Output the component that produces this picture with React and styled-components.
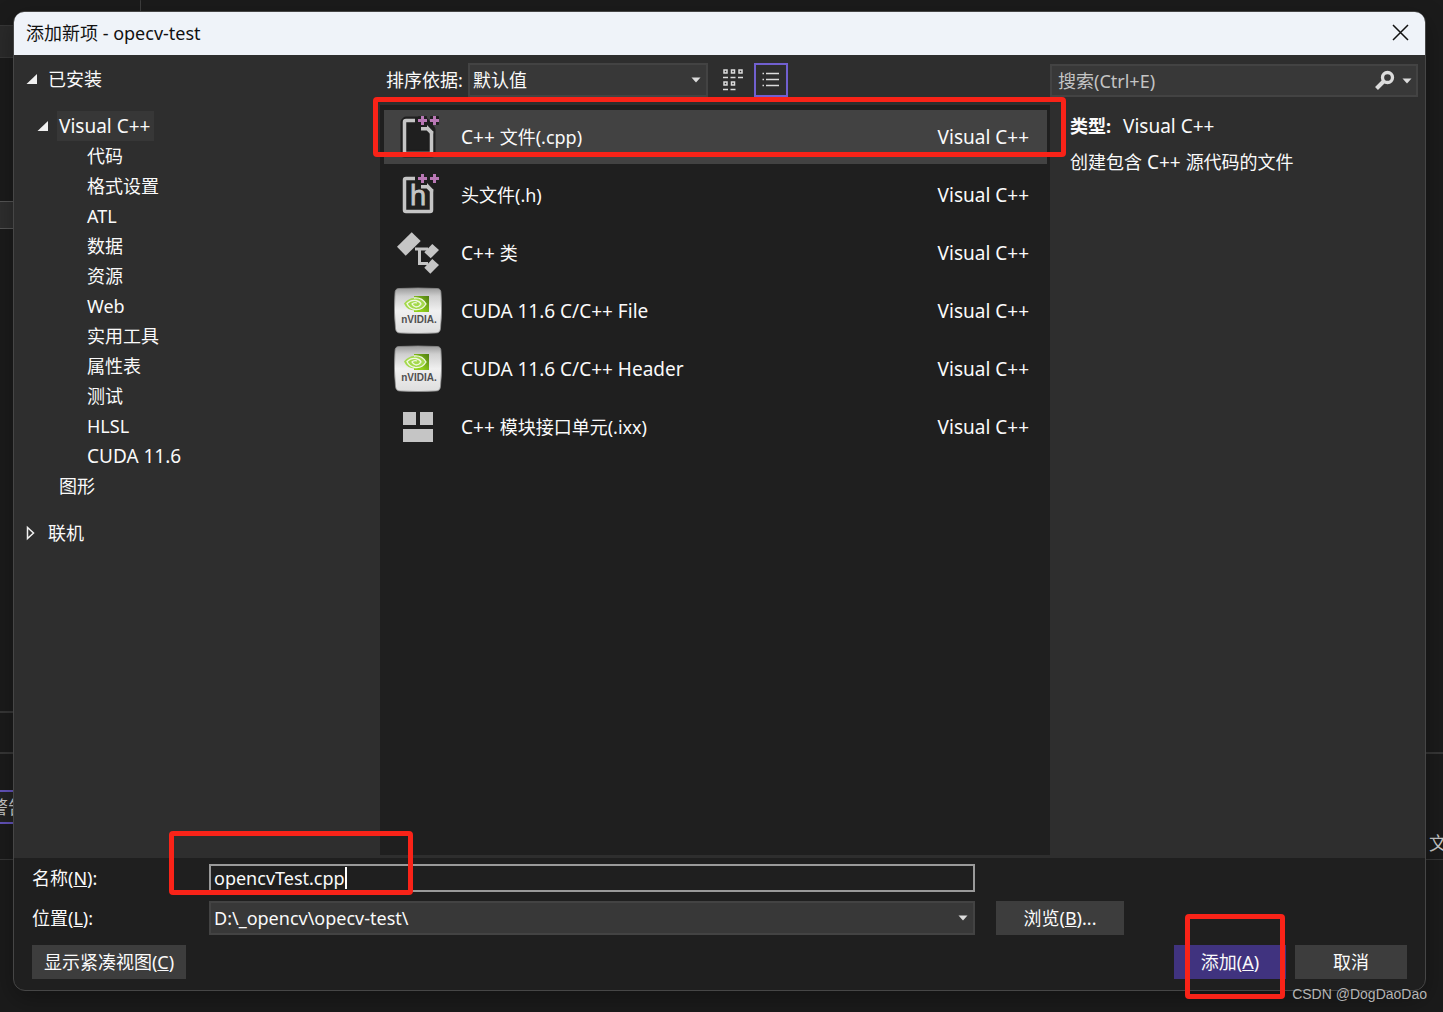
import React from "react";
import styled, { createGlobalStyle, css } from "styled-components";

const c = {
  desk: "#1b1b1b",
  panel: "#2e2e2e",
  dark: "#1f1f1f",
  field: "#383838",
  edge: "#464646",
  text: "#fafafa",
  icon: "#c5c5c5",
  accent: "#7160d0",
  mark: "#f92318",
};

const Global = createGlobalStyle`
  * { box-sizing: border-box; }
  body { margin: 0; background: ${c.desk}; }
  body, button, input, select {
    font-family: "Noto Sans", "Noto Sans CJK SC", sans-serif;
    font-size: 18px;
    line-height: 30px;
    color: ${c.text};
  }
  button, input, select { margin: 0; padding: 0; border: 0; border-radius: 0; background: none; outline: 0; }
  ul { list-style: none; margin: 0; padding: 0; }
  h1, h2, p { margin: 0; font-size: inherit; font-weight: inherit; }
`;

const Desktop = styled.div`
  position: relative;
  display: flex;
  min-height: 100vh;
  padding: 11px 17px 21px 13px;
  overflow: hidden;
`;

/* Pieces of the IDE window that stay visible round the dialog */
const Behind = styled.div`
  position: absolute;
  top: ${(p) => p.$top}px;
  height: ${(p) => p.$h}px;
  ${(p) => (p.$right ? "right: 0;" : `left: ${p.$left || 0}px;`)}
  width: ${(p) => p.$w || 14}px;
  overflow: hidden;
  border: 0 solid ${(p) => p.$line || "#363636"};
  border-top-width: ${(p) => p.$edge || 1}px;
  border-bottom-width: ${(p) => (p.$box ? p.$edge || 1 : 0)}px;
  background: ${(p) => p.$fill || "transparent"};
  color: #c8c8c8;
`;

const Clipped = styled.span`
  display: block;
  margin-left: -10px;
  white-space: nowrap;
`;

const EdgeText = styled.span`
  position: absolute;
  top: 828px;
  left: calc(100% - 14px);
  font-size: 18px;
  color: #c8c8c8;
`;

const Dialog = styled.section`
  position: relative;
  flex: 1;
  min-width: 0;
  display: flex;
  flex-direction: column;
  border: 1px solid ${c.edge};
  border-radius: 12px;
  background: ${c.dark};
  box-shadow: 0 8px 24px rgba(0, 0, 0, 0.3);
`;

const TitleBar = styled.header`
  display: flex;
  align-items: center;
  justify-content: space-between;
  height: 43px;
  padding: 0 16px 2px 12px;
  border-radius: 10px 10px 0 0;
  background: #eff3f9;
  color: #111;
`;

const CloseButton = styled.button`
  display: flex;
  padding: 0;
`;

const Body = styled.div`
  flex: 1;
  display: grid;
  grid-template-columns: 366px minmax(0, 1fr) 375px;
  background: ${c.panel};
`;

const Tree = styled.nav`
  padding: 9px 0 0 12px;
`;

const Branch = styled.div`
  display: flex;
  align-items: center;
  gap: ${(p) => p.$gap}px;
  padding-left: ${(p) => p.$indent || 0}px;
  margin-bottom: ${(p) => p.$after || 0}px;
`;

const Latin = styled.span`
  font-size: 19px;
`;

const Node = styled.button`
  display: block;
  height: 30px;
  text-align: left;
  white-space: nowrap;
  ${(p) =>
    p.$selected &&
    css`
      margin-left: -2px;
      padding: 0 4px 0 2px;
      background: #373737;
    `}
`;

const Leaves = styled.ul`
  padding-left: ${(p) => p.$indent}px;
  margin-bottom: ${(p) => p.$after || 0}px;
`;

const Center = styled.div`
  position: relative;
  display: flex;
  flex-direction: column;
  padding-bottom: 3px;
`;

const Toolbar = styled.div`
  display: flex;
  align-items: center;
  height: 50px;
  padding-left: 6px;
`;

const SortLabel = styled.label`
  width: 82px;
  white-space: nowrap;
`;

const SelectBox = styled.div`
  display: flex;
  align-items: center;
  position: relative;
  width: ${(p) => p.$width || "100%"};
  height: 34px;
  border: 2px solid #434343;
  background: ${c.field};
`;

const Select = styled.select`
  appearance: none;
  width: 100%;
  padding: 0 24px 0 3px;
`;

const Arrow = styled.svg`
  position: absolute;
  right: 5px;
  pointer-events: none;
`;

const ViewButton = styled.button`
  display: flex;
  align-items: center;
  justify-content: center;
  width: 34px;
  height: 34px;
  margin-left: ${(p) => p.$gap}px;
  border: 2px solid ${(p) => (p.$active ? c.accent : "transparent")};
`;

const List = styled.ul`
  flex: 1;
  display: flex;
  flex-direction: column;
  gap: 4px;
  padding: 5px 3px 0 4px;
  background: ${c.dark};
`;

const Row = styled.button`
  display: flex;
  align-items: center;
  width: 100%;
  height: 54px;
  padding: 0 18px 0 10px;
  text-align: left;
  white-space: nowrap;
  background: ${(p) => (p.$selected ? "#424242" : "transparent")};
`;

const RowName = styled.span`
  flex: 1;
  padding-left: 19px;
`;

const Details = styled.aside`
  padding: 9px 7px 0 0;
`;

const Search = styled.div`
  display: flex;
  align-items: center;
  gap: 7px;
  height: 33px;
  padding: 0 4px 0 6px;
  border: 2px solid #434343;
  background: ${c.field};
`;

const SearchInput = styled.input`
  flex: 1;
  min-width: 0;
  &::placeholder { color: #c4c4c4; opacity: 1; }
`;

const Info = styled.div`
  display: flex;
  flex-direction: column;
  gap: 6px;
  padding: 14px 0 0 20px;
`;

const Kind = styled.strong`
  margin-right: 12px;
  font-weight: 700;
`;

const Footer = styled.form`
  position: relative;
  display: flex;
  flex-direction: column;
  gap: 10px;
  padding: 6px 18px 11px 18px;
`;

const Fields = styled.div`
  display: grid;
  grid-template-columns: 177px minmax(0, 1fr) 128px;
  row-gap: 9px;
  align-items: center;
  padding-right: 283px;
`;

const FieldLabel = styled.label`
  line-height: 28px;
`;

const Stretch = styled.div`
  margin-right: 21px;
`;

const NameBox = styled.div`
  grid-column: 2;
  display: flex;
  align-items: center;
  height: 28px;
  margin-right: 21px;
  padding-left: 3px;
  border: 2px solid #9a9a9a;
  background: ${c.dark};
`;

const NameInput = styled.input`
  field-sizing: content;
  height: 24px;
  line-height: 24px;
  caret-color: transparent;
`;

const Caret = styled.span`
  width: 2px;
  height: 22px;
  background: #fff;
`;

const Button = styled.button`
  width: ${(p) => p.$w}px;
  height: 34px;
  white-space: nowrap;
  background: ${(p) => (p.$primary ? "#40337f" : "#3d3d3d")};
`;

const Actions = styled.div`
  display: flex;
  gap: 9px;
`;

const AddSlot = styled.div`
  position: relative;
  margin-left: auto;
`;

const mark = css`
  position: absolute;
  border: 5px solid ${c.mark};
  border-radius: 4px;
  pointer-events: none;
`;
const RowMark = styled.div`
  ${mark}
  top: 42px;
  left: -7px;
  right: -16px;
  height: 60px;
`;
const NameMark = styled.div`
  ${mark}
  top: -27px;
  left: 155px;
  width: 244px;
  height: 64px;
`;
const AddMark = styled.div`
  ${mark}
  top: -31px;
  left: 11px;
  width: 100px;
  height: 85px;
`;

const Watermark = styled.div`
  position: absolute;
  right: 16px;
  bottom: 8px;
  font-family: "Liberation Sans", sans-serif;
  font-size: 14px;
  line-height: 20px;
  color: #b4b4b4;
`;

const DownArrow = () => (
  <Arrow width="10" height="6" viewBox="0 0 10 6" aria-hidden="true">
    <path d="M0.5 0.5h9L5 5.5z" fill="#dcdcdc" />
  </Arrow>
);

const OpenMark = () => (
  <svg width="12" height="12" viewBox="0 0 12 12" aria-hidden="true">
    <path d="M11 1v10H0.5z" fill="#f0f0f0" />
  </svg>
);

const ClosedMark = () => (
  <svg width="12" height="16" viewBox="0 0 12 16" aria-hidden="true">
    <path d="M1.5 2.5v11L7.5 8z" fill="none" stroke="#f0f0f0" strokeWidth="1.5" />
  </svg>
);

const Pluses = () => (
  <path d="M27 3h3v3h3v3h-3v3h-3V9h-3V6h3zM39 3h3v3h3v3h-3v3h-3V9h-3V6h3z" fill="#b978b5" />
);

function FileIcon({ halo, letter }) {
  return (
    <svg width="48" height="48" viewBox="0 0 48 48" aria-hidden="true">
      {halo && (
        <g fill={c.dark} stroke={c.dark} strokeLinejoin="round">
          <path d="M12 7.5h18l7.5 9v24h-27V9z" strokeWidth="8" />
          <path d="M28.5 3v9M24 7.5h9M40.5 3v9M36 7.5h9" strokeWidth="8" />
        </g>
      )}
      <path
        d="M21 7.5H12q-1.500 0-1.500 1.500v30q0 1.500 1.500 1.500h24q1.500 0 1.500-1.500V18"
        fill="none"
        stroke={c.icon}
        strokeWidth="3.500"
      />
      <path d="M27 14h6v-2l6.200 6.500v2h-3.500l-3-3H27z" fill={c.icon} />
      <Pluses />
      {letter && (
        <text
          x="24"
          y="34"
          textAnchor="middle"
          fontSize="27"
          fontFamily="Noto Sans, sans-serif"
          fill={c.icon}
          stroke={c.icon}
          strokeWidth="0.800"
        >
          {letter}
        </text>
      )}
    </svg>
  );
}

const ClassIcon = () => (
  <svg width="48" height="48" viewBox="0 0 48 48" aria-hidden="true">
    <g fill={c.icon}>
      <path d="M17.700 3.300l9 8.700-15 14.700-8.700-9z" />
      <path d="M38.300 15l6.700 6-8.300 8.300-6.400-6z" />
      <path d="M38.300 30l6.700 6-8.700 8.700-6-6z" />
    </g>
    <path d="M21 20h13M25.500 20v14.500H34" fill="none" stroke={c.icon} strokeWidth="3" />
  </svg>
);

function CudaIcon({ id }) {
  return (
    <svg width="48" height="48" viewBox="0 0 48 48" aria-hidden="true">
      <defs>
        <linearGradient id={id} x1="0" y1="0" x2="0" y2="1">
          <stop offset="0" stopColor="#9b9b9b" />
          <stop offset="0.180" stopColor="#cfcfcf" />
          <stop offset="0.500" stopColor="#f0f0f0" />
          <stop offset="1" stopColor="#dedede" />
        </linearGradient>
        <linearGradient id={id + "g"} x1="0" y1="1" x2="1" y2="0">
          <stop offset="0.300" stopColor="#92d01c" />
          <stop offset="1" stopColor="#4f7d12" />
        </linearGradient>
      </defs>
      <path
        d="M5 1.500Q24 0.500 43 1.500q4 0 4 4.500Q48.500 24 46.500 41.500q-0.500 4.500-4.500 4.500Q24 47 6 46q-4 0-4.500-4.500Q-0.500 24 1 6q0-4.500 4-4.500z"
        fill={`url(#${id})`}
        stroke="#8c8c8c"
        strokeWidth="0.800"
      />
      <path d="M20 9h15v16H20z" fill={`url(#${id}g)`} />
      <path d="M10 16.500q5-6 11-5.500 7 0 11 6-4 6.500-11 6.500-8 0-11-7z" fill="#a4d94c" />
      <path
        d="M20 11q8-1 12 6-4 6.500-11 5.500-6-1-8-6 4-4 9-3 4 1 5 3.500-2 3-5 3-3-1-4-3 2-2 5-1"
        fill="none"
        stroke="#f1f8e4"
        strokeWidth="1.300"
      />
      <text
        x="25"
        y="36"
        textAnchor="middle"
        fontSize="10"
        fontWeight="700"
        fontFamily="Liberation Sans, sans-serif"
        fill="#505050"
      >
        nVIDIA.
      </text>
    </svg>
  );
}

const ModuleIcon = () => (
  <svg width="48" height="48" viewBox="0 0 48 48" aria-hidden="true">
    <path d="M9 9h13v13H9zM26 9h13v13H26zM9 26h30v13H9z" fill={c.icon} />
  </svg>
);

const TilesIcon = () => (
  <svg width="22" height="24" viewBox="0 0 22 24" aria-hidden="true">
    <g fill="none" stroke="#dcdcdc" strokeWidth="1.500">
      <path d="M2 2h3v3H2zM9.500 2h3v3h-3zM17 2h3v3h-3zM2 14h3v3H2zM9.500 14h3v3h-3z" />
      <path d="M1 9.500h5M8.500 9.500h5M16 9.500h5M1 21.500h5M8.500 21.500h5" />
    </g>
  </svg>
);

const LinesIcon = () => (
  <svg width="18" height="16" viewBox="0 0 18 16" aria-hidden="true">
    <path d="M0.500 1.500H2M4 1.500h13M0.500 7.500H2M4 7.500h13M0.500 13.500H2M4 13.500h13" stroke="#dcdcdc" strokeWidth="1.500" />
  </svg>
);

const SearchIcon = () => (
  <svg width="22" height="22" viewBox="0 0 22 22" aria-hidden="true">
    <circle cx="14.500" cy="7.500" r="5" fill="none" stroke="#dcdcdc" strokeWidth="3.300" />
    <path d="M11 11l-7.500 7.500" stroke="#dcdcdc" strokeWidth="4" />
  </svg>
);

const leaves = ["代码", "格式设置", "ATL", "数据", "资源", "Web", "实用工具", "属性表", "测试", "HLSL", "CUDA 11.6"];

const items = [
  { latin: "C++ ", name: "文件(.cpp)", icon: <FileIcon halo />, selected: true },
  { name: "头文件(.h)", icon: <FileIcon letter="h" /> },
  { latin: "C++ ", name: "类", icon: <ClassIcon /> },
  { latin: "CUDA 11.6 C/C++ File", icon: <CudaIcon id="cudaFile" /> },
  { latin: "CUDA 11.6 C/C++ Header", icon: <CudaIcon id="cudaHeader" /> },
  { latin: "C++ ", name: "模块接口单元(.ixx)", icon: <ModuleIcon /> },
];

export default function App() {
  return (
    <Desktop>
      <Global />
      <Behind $top={0} $h={12} $left={140} $w={1} $fill="#3d3d3d" />
      <Behind $top={25} $h={33} $box $fill="#2a2a2a" />
      <Behind $top={201} $h={28} $box $fill="#2e2e2e" $line="#555" />
      <Behind $top={711} $h={2} $edge={2} />
      <Behind $top={752} $h={2} $edge={2} />
      <Behind $top={790} $h={34} $box $edge={2} $line="#6252b8" $fill="#232323">
        <Clipped>警告</Clipped>
      </Behind>
      <Behind $top={859} $h={1} />
      <Behind $top={752} $h={2} $edge={2} $w={18} $right />
      <Behind $top={859} $h={1} $w={18} $right />
      <EdgeText>文</EdgeText>

      <Dialog aria-labelledby="dialog-title">
        <TitleBar>
          <h1 id="dialog-title">添加新项 - opecv-test</h1>
          <CloseButton aria-label="关闭">
            <svg width="17" height="17" viewBox="0 0 17 17" aria-hidden="true">
              <path d="M1 1l15 15M16 1L1 16" stroke="#111" strokeWidth="1.500" />
            </svg>
          </CloseButton>
        </TitleBar>

        <Body>
          <Tree>
            <Branch $gap={10} $after={17}>
              <OpenMark />
              <Node>已安装</Node>
            </Branch>
            <Branch $gap={10} $indent={11}>
              <OpenMark />
              <Node $selected>
                <Latin>Visual C++</Latin>
              </Node>
            </Branch>
            <Leaves $indent={61}>
              {leaves.map((t) => (
                <li key={t}>
                  <Node>{t.startsWith("CUDA") ? <Latin>{t}</Latin> : t}</Node>
                </li>
              ))}
            </Leaves>
            <Leaves $indent={33} $after={17}>
              <li>
                <Node>图形</Node>
              </li>
            </Leaves>
            <Branch $gap={10}>
              <ClosedMark />
              <Node>联机</Node>
            </Branch>
          </Tree>

          <Center>
            <Toolbar>
              <SortLabel htmlFor="sort">排序依据:</SortLabel>
              <SelectBox $width="240px">
                <Select id="sort" defaultValue="默认值">
                  <option>默认值</option>
                </Select>
                <DownArrow />
              </SelectBox>
              <ViewButton $gap={8} aria-label="小图标">
                <TilesIcon />
              </ViewButton>
              <ViewButton $gap={4} $active aria-label="中等图标">
                <LinesIcon />
              </ViewButton>
            </Toolbar>
            <List>
              {items.map((it) => (
                <li key={(it.latin || "") + (it.name || "")}>
                  <Row $selected={it.selected}>
                    {it.icon}
                    <RowName>
                      {it.latin && <Latin>{it.latin}</Latin>}
                      {it.name}
                    </RowName>
                    <Latin>Visual C++</Latin>
                  </Row>
                </li>
              ))}
            </List>
            <RowMark />
          </Center>

          <Details>
            <Search>
              <SearchInput type="search" aria-label="搜索" placeholder="搜索(Ctrl+E)" />
              <SearchIcon />
              <svg width="10" height="6" viewBox="0 0 10 6" aria-hidden="true">
                <path d="M0.500 0.500h9L5 5.500z" fill="#dcdcdc" />
              </svg>
            </Search>
            <Info>
              <p>
                <Kind>类型:</Kind>
                <Latin>Visual C++</Latin>
              </p>
              <p>
                创建包含<Latin> C++ </Latin>源代码的文件
              </p>
            </Info>
          </Details>
        </Body>

        <Footer onSubmit={(e) => e.preventDefault()}>
          <Fields>
            <FieldLabel htmlFor="name">
              名称(<u>N</u>):
            </FieldLabel>
            <NameBox>
              <NameInput id="name" defaultValue="opencvTest.cpp" />
              <Caret />
            </NameBox>
            <span />
            <FieldLabel htmlFor="place">
              位置(<u>L</u>):
            </FieldLabel>
            <Stretch>
              <SelectBox>
                <Select id="place" defaultValue="D:\_opencv\opecv-test\">
                  <option>D:\_opencv\opecv-test\</option>
                </Select>
                <DownArrow />
              </SelectBox>
            </Stretch>
            <Button type="button" $w={128}>
              浏览(<u>B</u>)...
            </Button>
          </Fields>
          <Actions>
            <Button type="button" $w={154}>
              显示紧凑视图(<u>C</u>)
            </Button>
            <AddSlot>
              <Button type="submit" $w={112} $primary>
                添加(<u>A</u>)
              </Button>
              <AddMark />
            </AddSlot>
            <Button type="button" $w={112}>
              取消
            </Button>
          </Actions>
          <NameMark />
        </Footer>
      </Dialog>
      <Watermark>CSDN @DogDaoDao</Watermark>
    </Desktop>
  );
}
